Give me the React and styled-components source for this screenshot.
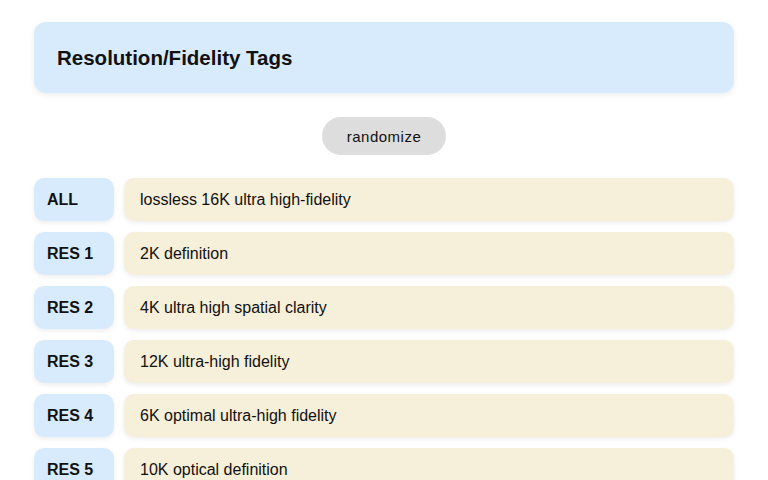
import React from "react";
import styled, { createGlobalStyle } from "styled-components";

const GlobalStyle = createGlobalStyle`
  body {
    margin: 0;
    background: #ffffff;
    font-family: "Liberation Sans", Arial, sans-serif;
    color: #111;
  }
`;

const tags = [
  { id: "all", label: "ALL", value: "lossless 16K ultra high-fidelity" },
  { id: "r1", label: "RES 1", value: "2K definition" },
  { id: "r2", label: "RES 2", value: "4K ultra high spatial clarity" },
  { id: "r3", label: "RES 3", value: "12K ultra-high fidelity" },
  { id: "r4", label: "RES 4", value: "6K optimal ultra-high fidelity" },
  { id: "r5", label: "RES 5", value: "10K optical definition" },
];

const App = () => {
  return (
    <>
      <GlobalStyle />
      <Page>
        <Header>
          <Title>Resolution/Fidelity Tags</Title>
        </Header>
        <Actions>
          <RandomButton>randomize</RandomButton>
        </Actions>
        <TagList>
          {tags.map((tag) => (
            <TagRow key={tag.id}>
              <TagLabel>{tag.label}</TagLabel>
              <TagValue>{tag.value}</TagValue>
            </TagRow>
          ))}
        </TagList>
      </Page>
    </>
  );
};

const Page = styled.div`
  max-width: 700px;
  margin: 0 auto;
  padding-top: 22px;
`;

const Header = styled.div`
  background: #d8ebfc;
  border-radius: 12px;
  height: 71px;
  box-sizing: border-box;
  display: flex;
  align-items: center;
  padding: 1px 23px 0;
  box-shadow: 0 2px 6px rgba(0, 0, 0, 0.08);
`;

const Title = styled.h1`
  margin: 0;
  font-size: 20.5px;
  font-weight: bold;
  color: #111;
`;

const Actions = styled.div`
  display: flex;
  justify-content: center;
  margin: 24px 0 23px;
`;

const RandomButton = styled.button`
  background: #dddddd;
  border: none;
  border-radius: 19px;
  height: 38px;
  width: 124px;
  font-family: "Liberation Sans", Arial, sans-serif;
  font-size: 15px;
  letter-spacing: 0.5px;
  color: #111;
  cursor: pointer;
`;

const TagList = styled.div`
  display: flex;
  flex-direction: column;
  gap: 11px;
`;

const TagRow = styled.div`
  display: flex;
  gap: 10px;
`;

const TagLabel = styled.div`
  flex: 0 0 80px;
  height: 43px;
  box-sizing: border-box;
  padding: 1px 0 0 13px;
  display: flex;
  align-items: center;
  background: #d8ebfc;
  border-radius: 10px;
  font-size: 16px;
  font-weight: bold;
  box-shadow: 0 2px 5px rgba(0, 0, 0, 0.07);
`;

const TagValue = styled.div`
  flex: 1;
  height: 43px;
  box-sizing: border-box;
  padding: 1px 0 0 16px;
  display: flex;
  align-items: center;
  background: #f6efd9;
  border-radius: 10px;
  font-size: 16px;
  box-shadow: 0 2px 5px rgba(0, 0, 0, 0.07);
`;

export default App;
